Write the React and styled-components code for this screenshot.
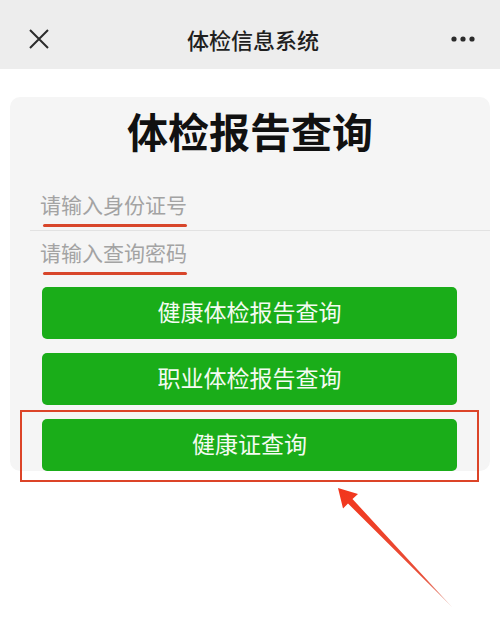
import React from "react";
import styled, { createGlobalStyle } from "styled-components";

const Global = createGlobalStyle`
  html, body {
    margin: 0;
    padding: 0;
    background: #ffffff;
  }
  body {
    font-family: "Noto Sans CJK SC", "Noto Sans", sans-serif;
  }
`;

const App = () => {
  return (
    <Page>
      <Global />
      <Header>
        <IconBtn>
          <svg width="22" height="22" viewBox="0 0 22 22">
            <path d="M2 2 L20 20 M20 2 L2 20" stroke="#2b2b2b" strokeWidth="2" fill="none" />
          </svg>
        </IconBtn>
        <HeaderTitle>体检信息系统</HeaderTitle>
        <IconBtn>
          <svg width="26" height="8" viewBox="0 0 26 8">
            <circle cx="4" cy="4" r="2.6" fill="#2b2b2b" />
            <circle cx="13" cy="4" r="2.6" fill="#2b2b2b" />
            <circle cx="22" cy="4" r="2.6" fill="#2b2b2b" />
          </svg>
        </IconBtn>
      </Header>
      <Body>
        <Card>
          <Title>体检报告查询</Title>
          <Form>
            <InputRow $divider>
              <Input placeholder="请输入身份证号" />
              <Mark />
            </InputRow>
            <InputRow>
              <Input type="password" placeholder="请输入查询密码" />
              <Mark />
            </InputRow>
          </Form>
          <Buttons>
            <Button>健康体检报告查询</Button>
            <Button>职业体检报告查询</Button>
            <Highlight>
              <Button>健康证查询</Button>
            </Highlight>
          </Buttons>
        </Card>
      </Body>
      <Arrow width="500" height="638" viewBox="0 0 500 638">
        <defs>
          <linearGradient id="arrowFade" x1="340" y1="490" x2="452" y2="607" gradientUnits="userSpaceOnUse">
            <stop offset="0" stopColor="#f2361c" />
            <stop offset="0.75" stopColor="#e8503a" />
            <stop offset="1" stopColor="#e6b7ad" />
          </linearGradient>
        </defs>
        <polygon
          points="338,488 358,494 352.5,499 452,607 348,503.5 343,508.5"
          fill="url(#arrowFade)"
        />
      </Arrow>
    </Page>
  );
};
export default App;

const Page = styled.div`
  position: relative;
  width: 500px;
  height: 638px;
  overflow: hidden;
  background: #ffffff;
`;

const Header = styled.div`
  height: 69px;
  background: #ededed;
  display: flex;
  align-items: center;
  justify-content: space-between;
  padding: 9px 24px 0 26px;
  box-sizing: border-box;
`;

const IconBtn = styled.div`
  width: 26px;
  height: 26px;
  display: flex;
  align-items: center;
  justify-content: center;
`;

const HeaderTitle = styled.div`
  font-size: 22px;
  font-weight: 500;
  color: #1f1f1f;
  padding-left: 4px;
`;

const Body = styled.div`
  padding: 28px 10px 0;
`;

const Card = styled.div`
  background: #f5f5f5;
  border-radius: 10px;
  padding: 6px 0 0;
`;

const Title = styled.h1`
  margin: 0 0 26px;
  text-align: center;
  font-size: 41px;
  line-height: 54px;
  font-weight: 700;
  color: #111111;
`;

const Form = styled.div`
  margin-left: 20px;
`;

const InputRow = styled.div`
  position: relative;
  height: 47px;
  display: flex;
  align-items: center;
  border-bottom: 1px solid ${(p) => (p.$divider ? "#e2e2e2" : "transparent")};
`;

const Input = styled.input`
  flex: 1;
  border: none;
  outline: none;
  background: transparent;
  padding: 0 0 5px 10px;
  font-family: "Noto Sans CJK SC", sans-serif;
  font-size: 21px;
  color: #333;
  &::placeholder {
    color: #a3a3a3;
  }
`;

const Mark = styled.span`
  position: absolute;
  left: 13px;
  bottom: 3px;
  width: 144px;
  height: 3px;
  border-radius: 2px;
  background: #d8462b;
`;

const Buttons = styled.div`
  display: flex;
  flex-direction: column;
  gap: 14px;
  padding: 8px 33px 0 32px;
`;

const Button = styled.button`
  width: 100%;
  height: 52px;
  border: none;
  border-radius: 5px;
  background: #1aad19;
  color: #f4fbf2;
  font-family: "Noto Sans CJK SC", sans-serif;
  font-size: 23px;
  display: flex;
  align-items: center;
  justify-content: center;
  padding: 0 0 4px;
  cursor: pointer;
`;

const Highlight = styled.div`
  position: relative;
  &::after {
    content: "";
    position: absolute;
    top: -9px;
    bottom: -11px;
    left: -22px;
    right: -22px;
    border: 2px solid #dc4428;
    pointer-events: none;
  }
`;

const Arrow = styled.svg`
  position: absolute;
  top: 0;
  left: 0;
  pointer-events: none;
`;
